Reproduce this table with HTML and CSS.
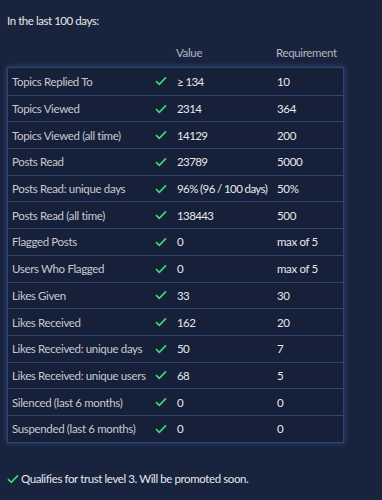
FILE: index.html
```
<!DOCTYPE html>
<html>
<head>
<meta charset="utf-8">
<link rel="stylesheet" href="styles.css">
</head>
<body>
<div class="page">
  <p class="intro">In the last 100 days:</p>
  <div class="head">
    <span class="c-label"></span>
    <span class="c-check"></span>
    <span class="c-value">Value</span>
    <span class="c-req">Requirement</span>
  </div>
  <div class="table">
    <div class="row"><span class="c-label">Topics Replied To</span><span class="c-check"><svg viewBox="0 0 12 10"><path d="M1 5.2l3.3 3.2L11 1.3"/></svg></span><span class="c-value">≥ 134</span><span class="c-req">10</span></div>
    <div class="row"><span class="c-label">Topics Viewed</span><span class="c-check"><svg viewBox="0 0 12 10"><path d="M1 5.2l3.3 3.2L11 1.3"/></svg></span><span class="c-value">2314</span><span class="c-req">364</span></div>
    <div class="row"><span class="c-label">Topics Viewed (all time)</span><span class="c-check"><svg viewBox="0 0 12 10"><path d="M1 5.2l3.3 3.2L11 1.3"/></svg></span><span class="c-value">14129</span><span class="c-req">200</span></div>
    <div class="row"><span class="c-label">Posts Read</span><span class="c-check"><svg viewBox="0 0 12 10"><path d="M1 5.2l3.3 3.2L11 1.3"/></svg></span><span class="c-value">23789</span><span class="c-req">5000</span></div>
    <div class="row"><span class="c-label">Posts Read: unique days</span><span class="c-check"><svg viewBox="0 0 12 10"><path d="M1 5.2l3.3 3.2L11 1.3"/></svg></span><span class="c-value">96% (96 / 100 days)</span><span class="c-req">50%</span></div>
    <div class="row"><span class="c-label">Posts Read (all time)</span><span class="c-check"><svg viewBox="0 0 12 10"><path d="M1 5.2l3.3 3.2L11 1.3"/></svg></span><span class="c-value">138443</span><span class="c-req">500</span></div>
    <div class="row"><span class="c-label">Flagged Posts</span><span class="c-check"><svg viewBox="0 0 12 10"><path d="M1 5.2l3.3 3.2L11 1.3"/></svg></span><span class="c-value">0</span><span class="c-req">max of 5</span></div>
    <div class="row"><span class="c-label">Users Who Flagged</span><span class="c-check"><svg viewBox="0 0 12 10"><path d="M1 5.2l3.3 3.2L11 1.3"/></svg></span><span class="c-value">0</span><span class="c-req">max of 5</span></div>
    <div class="row"><span class="c-label">Likes Given</span><span class="c-check"><svg viewBox="0 0 12 10"><path d="M1 5.2l3.3 3.2L11 1.3"/></svg></span><span class="c-value">33</span><span class="c-req">30</span></div>
    <div class="row"><span class="c-label">Likes Received</span><span class="c-check"><svg viewBox="0 0 12 10"><path d="M1 5.2l3.3 3.2L11 1.3"/></svg></span><span class="c-value">162</span><span class="c-req">20</span></div>
    <div class="row"><span class="c-label">Likes Received: unique days</span><span class="c-check"><svg viewBox="0 0 12 10"><path d="M1 5.2l3.3 3.2L11 1.3"/></svg></span><span class="c-value">50</span><span class="c-req">7</span></div>
    <div class="row"><span class="c-label">Likes Received: unique users</span><span class="c-check"><svg viewBox="0 0 12 10"><path d="M1 5.2l3.3 3.2L11 1.3"/></svg></span><span class="c-value">68</span><span class="c-req">5</span></div>
    <div class="row"><span class="c-label">Silenced (last 6 months)</span><span class="c-check"><svg viewBox="0 0 12 10"><path d="M1 5.2l3.3 3.2L11 1.3"/></svg></span><span class="c-value">0</span><span class="c-req">0</span></div>
    <div class="row"><span class="c-label">Suspended (last 6 months)</span><span class="c-check"><svg viewBox="0 0 12 10"><path d="M1 5.2l3.3 3.2L11 1.3"/></svg></span><span class="c-value">0</span><span class="c-req">0</span></div>
  </div>
  <p class="result"><svg class="rcheck" viewBox="0 0 12 10"><path d="M1 5.2l3.3 3.2L11 1.3"/></svg>Qualifies for trust level 3. Will be promoted soon.</p>
</div>
</body>
</html>
```
FILE: styles.css
```
html, body {
  margin: 0;
  padding: 0;
  background: #18233d;
}
body {
  font-family: Lato, "Liberation Sans", sans-serif;
  font-size: 11.5px;
  letter-spacing: -0.35px;
  color: #e6e8ec;
  width: 382px;
  height: 500px;
  overflow: hidden;
}
.page {
  padding: 0 7px;
}
.intro {
  margin: 0;
  padding-top: 12px;
  height: 18px;
  line-height: 18px;
  letter-spacing: -0.45px;
}
.head {
  display: flex;
  margin-top: 14px;
  height: 18px;
  line-height: 18px;
  color: #b4b8c0;
}
.table {
  box-sizing: border-box;
  width: 337px;
  height: 376px;
  margin-top: 5px;
  border: 1px solid #2d4670;
  box-shadow: 0 0 5px 1px rgba(60, 100, 170, 0.45);
  background: #172039;
}
.row {
  box-sizing: border-box;
  display: flex;
  align-items: center;
  height: 26.7px;
  border-top: 1px solid #2d4670;
  white-space: nowrap;
}
.row:first-child {
  border-top: none;
}
.c-label {
  box-sizing: border-box;
  width: 138px;
  padding-left: 4px;
  color: #c6cad2;
  flex: none;
}
.c-check {
  width: 31px;
  flex: none;
  display: flex;
  align-items: center;
}
.c-check svg {
  width: 12px;
  height: 10px;
  margin-left: 9px;
}
svg path {
  fill: none;
  stroke: #3fd47c;
  stroke-width: 1.7;
}
.c-value {
  width: 100px;
  flex: none;
}
.row .c-value {
  letter-spacing: -0.6px;
}
.c-req {
  flex: 1;
}
.result {
  margin: 0;
  margin-top: 27px;
  display: flex;
  align-items: center;
  line-height: 18px;
  letter-spacing: -0.4px;
}
.rcheck {
  width: 12px;
  height: 10px;
  margin-right: 2px;
}
```
